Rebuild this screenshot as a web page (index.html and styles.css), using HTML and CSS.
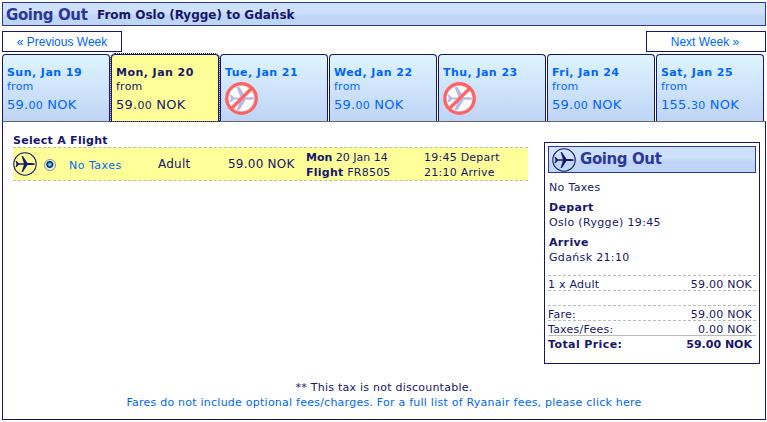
FILE: index.html
```
<!DOCTYPE html>
<html lang="en">

<head>
    <meta charset="UTF-8">
    <title>Select Flight</title>
    <link rel="stylesheet" href="styles.css">
</head>

<body>

    <!-- Shared icons -->
    <svg class="icon-defs" width="0" height="0">
        <symbol id="flight" viewBox="0 0 24 24">
            <circle cx="12" cy="12" r="11.2" fill="none" stroke="#16166b" stroke-width="1.1"/>
            <path d="M2.500 8.800h.8l2.600 2.500h5L8.600 4h1.200l4.700 6.900h4.700q2.600.3 3.100 1.100-.5.800-3.100 1.100h-4.700L9.800 20H8.600l2.300-7.300h-5l-2.600 2.500h-.8L3.500 12z" fill="#16166b"/>
        </symbol>
        <symbol id="no-flight" viewBox="0 0 33 33">
            <circle cx="16.5" cy="16.5" r="14.5" fill="#fff"/>
            <path d="M4.500 12.700h1.600l3 2.700h6.400L11.500 5h3l6.300 10.200h6q2.400.3 2.800 1.300-.4 1-2.800 1.300h-6L14.500 28h-3l4-10.400H9.100l-3 2.700H4.500l1.300-3.800z" fill="#b9b9e8"/>
            <circle cx="16.500" cy="16.500" r="14.700" fill="none" stroke="#ff6464" stroke-width="3.400"/>
            <path d="M6.500 26.500l20-20" stroke="#ff6464" stroke-width="3.200"/>
        </symbol>
    </svg>

    <div class="container">
        <!-- Title Section -->
        <div class="title-bar">
            <h1>Going Out</h1>
            <h2>From Oslo (Rygge) to Gdańsk</h2>
        </div>

        <!-- Week Navigation -->
        <div class="week-nav">
            <a class="week-button">« Previous Week</a>
            <a class="week-button next">Next Week »</a>
        </div>

        <!-- Day Tabs -->
        <div class="tabs">
            <div class="tab">
                <b>Sun, Jan 19</b>
                <span class="from">from</span>
                <span class="price">59.<small>00</small> NOK</span>
            </div>
            <div class="tab selected">
                <b>Mon, Jan 20</b>
                <span class="from">from</span>
                <span class="price">59.<small>00</small> NOK</span>
            </div>
            <div class="tab">
                <b>Tue, Jan 21</b>
                <svg class="no-flight"><use href="#no-flight"/></svg>
            </div>
            <div class="tab">
                <b>Wed, Jan 22</b>
                <span class="from">from</span>
                <span class="price">59.<small>00</small> NOK</span>
            </div>
            <div class="tab">
                <b>Thu, Jan 23</b>
                <svg class="no-flight"><use href="#no-flight"/></svg>
            </div>
            <div class="tab">
                <b>Fri, Jan 24</b>
                <span class="from">from</span>
                <span class="price">59.<small>00</small> NOK</span>
            </div>
            <div class="tab">
                <b>Sat, Jan 25</b>
                <span class="from">from</span>
                <span class="price">155.<small>30</small> NOK</span>
            </div>
        </div>

        <div class="content">
            <div class="columns">
                <!-- Flight Section -->
                <div class="flights">
                    <h3>Select A Flight</h3>
                    <div class="flight-row">
                        <svg class="flight-icon"><use href="#flight"/></svg>
                        <span class="radio"></span>
                        <a class="no-taxes">No Taxes</a>
                        <span class="adult">Adult</span>
                        <span class="fare">59.00 NOK</span>
                        <div class="flight-date">
                            <div class="date"><b>Mon</b> 20 Jan 14</div>
                            <div><b>Flight</b> FR8505</div>
                        </div>
                        <div class="flight-time">
                            <div>19:45 Depart</div>
                            <div>21:10 Arrive</div>
                        </div>
                    </div>
                </div>

                <!-- Summary Section -->
                <div class="summary">
                    <div class="summary-title">
                        <svg class="flight-icon"><use href="#flight"/></svg>
                        <span>Going Out</span>
                    </div>
                    <div class="details">
                        <p>No Taxes</p>
                        <p><b>Depart</b><br>Oslo (Rygge) 19:45</p>
                        <p><b>Arrive</b><br>Gdańsk 21:10</p>
                    </div>
                    <div class="price-row first"><span>1 x Adult</span><span>59.00 NOK</span></div>
                    <div class="price-row"></div>
                    <div class="price-row"><span>Fare:</span><span>59.00 NOK</span></div>
                    <div class="price-row"><span>Taxes/Fees:</span><span>0.00 NOK</span></div>
                    <div class="price-row total"><span class="label">Total Price:</span><span>59.00 NOK</span></div>
                </div>
            </div>

            <div class="notes">
                <div class="note">** This tax is not discountable.</div>
                <a class="fees-link">Fares do not include optional fees/charges. For a full list of Ryanair fees, please click here</a>
            </div>
        </div>
    </div>

</body>

</html>
```
FILE: styles.css
```
* {
    box-sizing: border-box;
}

body {
    margin: 0;
    padding: 2px 1px 0 2px;
    background-color: #fff;
    font-family: Verdana, "DejaVu Sans", sans-serif;
    font-size: 11px;
    line-height: 15px;
    letter-spacing: 0.24px;
    color: #16166b;
    white-space: nowrap;
    overflow: hidden;
}

.icon-defs {
    position: absolute;
}

h1,
h2,
h3,
p {
    margin: 0;
}

a {
    color: #0066ff;
}

.container {
    width: 764px;
}

.title-bar,
.summary-title {
    display: flex;
    align-items: center;
    border: 1px solid #2b3896;
    background: linear-gradient(#cfe0fa 0, #cfe0fa 45%, #bfd5f6 60%, #bfd5f6 100%);
}

.title-bar {
    height: 24px;
    padding-left: 3px;
}

.title-bar h1,
.summary-title span {
    font-size: 15px;
    font-weight: bold;
    letter-spacing: -0.4px;
    color: #2b3896;
}

.title-bar h1 {
    width: 91px;
    padding-top: 2px;
}

.title-bar h2 {
    padding-top: 3px;
    font-size: 12px;
    letter-spacing: 0;
}

.week-nav {
    display: flex;
    justify-content: space-between;
    margin-top: 5px;
}

.week-button {
    width: 120px;
    height: 21px;
    border: 1px solid #16166b;
    font-family: Arial, "Liberation Sans", sans-serif;
    font-size: 12px;
    line-height: 20px;
    letter-spacing: 0;
    text-align: center;
}

.week-button.next {
    padding-right: 2px;
}

.tabs {
    display: flex;
    gap: 1px;
    margin-top: 2px;
}

.tab {
    width: 108px;
    height: 67px;
    padding: 10px 0 0 4px;
    border: 1px solid #16166b;
    border-bottom: none;
    border-radius: 4px 4px 0 0;
    background: linear-gradient(#def4fe, #bfd4f5);
    color: #0066ff;
}

.tab.selected {
    position: relative;
    z-index: 1;
    background: #ffff99;
    color: #16166b;
    outline: 1px dotted #16166b;
}

.tab b,
.tab span {
    display: block;
}

.tab b {
    letter-spacing: 0.45px;
}

.tab .from {
    line-height: 14px;
}

.price {
    margin-top: 1px;
    font-size: 13px;
    line-height: 20px;
}

.price small {
    font-size: 11px;
}

.no-flight {
    display: block;
    width: 33px;
    height: 33px;
    margin-top: 2px;
}

.content {
    height: 299px;
    border: 1px solid #16166b;
    border-top-color: #666;
}

.columns {
    display: flex;
    justify-content: space-between;
    height: 258px;
    padding: 11px 5px 0 10px;
}

h3 {
    height: 14px;
    font-size: 11px;
    line-height: 16px;
    letter-spacing: 0.28px;
}

.flight-row {
    display: flex;
    align-items: center;
    width: 515px;
    height: 34px;
    border-top: 1px dashed #bbb;
    border-bottom: 1px dashed #bbb;
    background-color: #ffff99;
}

.flight-icon {
    width: 24px;
    height: 24px;
}

.radio {
    width: 12px;
    height: 12px;
    margin: 2px 0 0 7px;
    border: 1px solid #8b9096;
    border-radius: 50%;
    background: radial-gradient(circle at 48% 45%, #bdf3ff 0, #2fa2cc 20%, #0b315c 36%, #0b315c 40%, #f4f4f4 54%);
}

.no-taxes {
    width: 89px;
    margin-left: 13px;
    padding-top: 2px;
    letter-spacing: 0.48px;
}

.adult {
    width: 70px;
    padding-top: 1px;
    font-size: 12px;
}

.fare {
    width: 78px;
    padding-top: 1px;
    font-size: 12px;
}

.flight-date,
.flight-time {
    padding-top: 2px;
}

.flight-date {
    width: 118px;
}

.flight-date .date {
    letter-spacing: 0;
}

.summary {
    width: 216px;
    height: 222px;
    margin-top: 9px;
    padding: 3px;
    border: 1px solid #16166b;
}

.summary-title {
    height: 27px;
    padding-left: 3px;
}

.summary-title span {
    margin-left: 4px;
}

.details {
    height: 102px;
    padding: 7px 0 0 1px;
    letter-spacing: 0.34px;
}

.details p {
    margin-bottom: 5px;
}

.price-row {
    display: flex;
    justify-content: space-between;
    height: 15px;
    padding-right: 4px;
    border-bottom: 1px dashed #bbb;
    line-height: 17px;
}

.price-row.first {
    height: 16px;
    border-top: 1px dashed #bbb;
}

.price-row:nth-last-child(2) {
    border-bottom: 1px solid #bbb;
}

.total {
    border-bottom: none;
    font-weight: bold;
    letter-spacing: 0;
}

.total .label {
    letter-spacing: 0.4px;
}

.notes {
    text-align: center;
}
```
